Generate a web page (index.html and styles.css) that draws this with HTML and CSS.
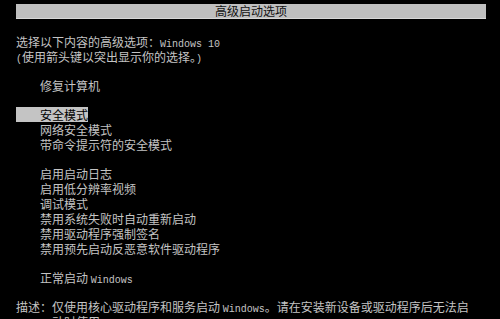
FILE: index.html
```html
<!DOCTYPE html>
<html lang="zh-CN">
<head>
<meta charset="utf-8">
<title>高级启动选项</title>
<link rel="stylesheet" href="styles.css">
</head>
<body>
<div class="screen">
  <div class="titlebar">高级启动选项</div>
  <div class="block intro">
    <div class="line">选择以下内容的高级选项：<span class="lat">Windows 10</span></div>
    <div class="line"><span class="lat">(</span>使用箭头键以突出显示你的选择。<span class="lat">)</span></div>
  </div>
  <div class="block">
    <div class="item">修复计算机</div>
  </div>
  <div class="block">
    <div class="item selected">安全模式</div>
    <div class="item">网络安全模式</div>
    <div class="item">带命令提示符的安全模式</div>
  </div>
  <div class="block">
    <div class="item">启用启动日志</div>
    <div class="item">启用低分辨率视频</div>
    <div class="item">调试模式</div>
    <div class="item">禁用系统失败时自动重新启动</div>
    <div class="item">禁用驱动程序强制签名</div>
    <div class="item">禁用预先启动反恶意软件驱动程序</div>
  </div>
  <div class="block">
    <div class="item">正常启动 <span class="lat">Windows</span></div>
  </div>
  <div class="block desc">
    <div class="desc-label">描述：</div>
    <div class="desc-text">仅使用核心驱动程序和服务启动 <span class="lat">Windows</span>。请在安装新设备或驱动程序后无法启动时使用。</div>
  </div>
</div>
</body>
</html>
```
FILE: styles.css
```css
html, body {
  margin: 0;
  padding: 0;
  background: #000;
  height: 100%;
  overflow: hidden;
}

.screen {
  padding: 4px 14px 0 16px;
  color: #c4c4c4;
  font-family: "Noto Sans CJK SC", "Liberation Mono", monospace;
  font-size: 12px;
  line-height: 15px;
}

.lat {
  font-family: "Liberation Mono", monospace;
  font-size: 10px;
  line-height: 0;
}

.titlebar {
  background: #bfbfbf;
  color: #111;
  text-align: center;
  height: 14px;
  line-height: 14px;
  border-bottom: 1px solid #d8d8d8;
}

.block {
  margin-top: 14px;
}

.intro {
  margin-top: 15px;
}

.item {
  padding-left: 24px;
  width: fit-content;
}

.item.selected {
  background: #c4c4c4;
  color: #000;
}

.desc {
  display: flex;
}

.desc-label {
  flex: none;
  width: 36px;
}

.desc-text {
  width: 422px;
}
```
